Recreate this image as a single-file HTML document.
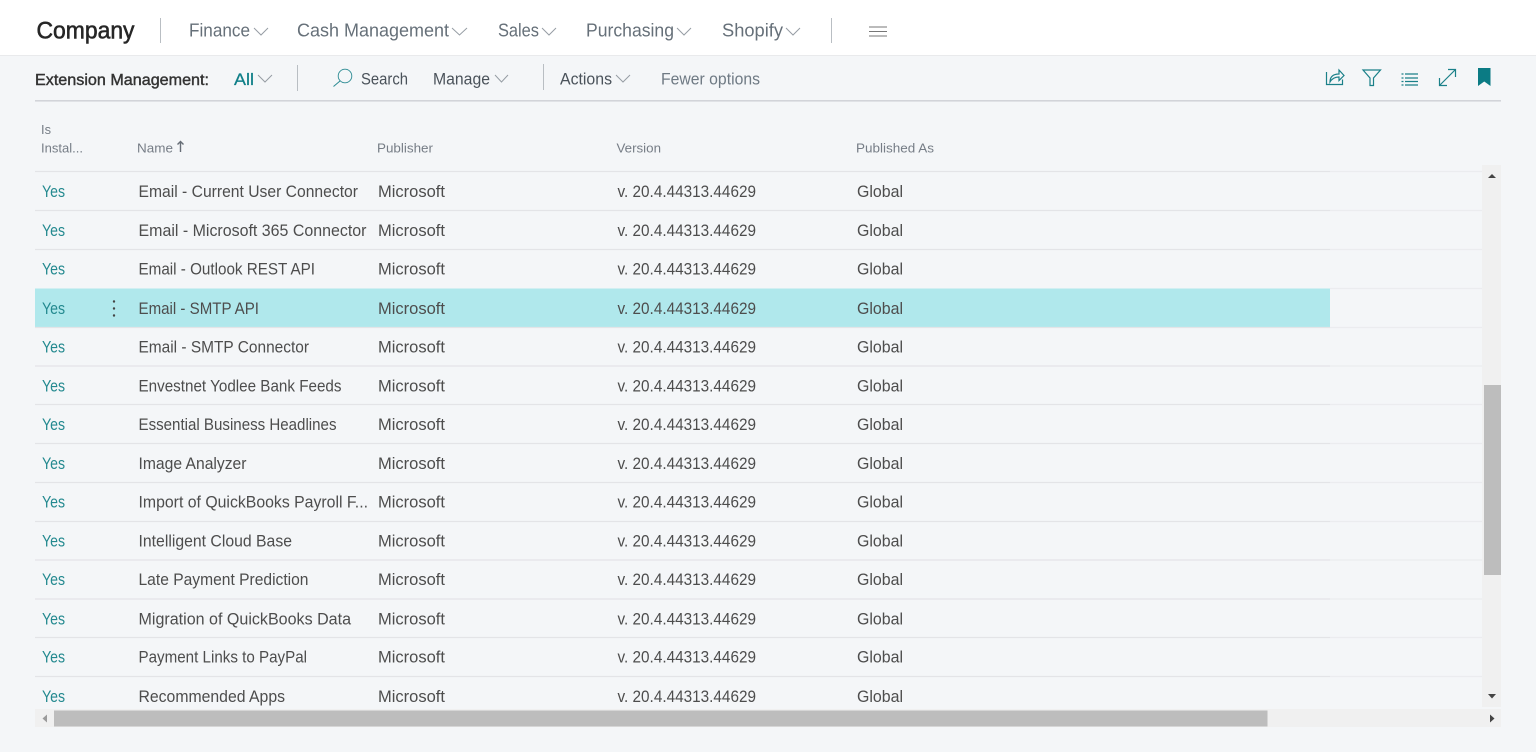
<!DOCTYPE html>
<html lang="en"><head><meta charset="utf-8"><title>Extension Management</title>
<style>
html,body{margin:0;padding:0;width:1536px;height:752px;overflow:hidden;background:#f4f6f8}
svg{display:block;font-family:"Liberation Sans",sans-serif;filter:blur(.3px)}
.nav{font-size:18px;fill:#667079}
.tb{font-size:16.500px;fill:#4a525a}
.th{font-size:13px;fill:#767d86}
.y{font-size:16.500px;fill:#23898f}
.c{font-size:16.500px;fill:#4d4d4d}
.chev{fill:none;stroke:#969da4;stroke-width:1}
.ic{fill:none;stroke:#1a8089;stroke-width:1.200}
.sep{stroke:#e3e4e7;stroke-width:1.300}
.sep2{stroke:#ebecef;stroke-width:1.300}
</style></head><body>
<svg width="1536" height="752" viewBox="0 0 1536 752" xmlns="http://www.w3.org/2000/svg">
<rect width="1536" height="752" fill="#f4f6f8"/>
<rect width="1536" height="55" fill="#fff"/>
<rect y="55" width="1536" height="1" fill="#e9eaec"/>

<text x="36.500" y="38.500" font-size="24" fill="#262626" stroke="#262626" stroke-width=".55" textLength="98" lengthAdjust="spacingAndGlyphs">Company</text>
<rect x="160" y="18" width="1" height="25" fill="#b9bec3"/>
<text class="nav" x="189" y="36.500" textLength="61" lengthAdjust="spacingAndGlyphs">Finance</text>
<path class="chev" d="M254 28l7 7 7-7"/>
<text class="nav" x="297" y="36.500" textLength="152" lengthAdjust="spacingAndGlyphs">Cash Management</text>
<path class="chev" d="M452 28l7.500 7 7.500-7"/>
<text class="nav" x="498" y="36.500" textLength="41" lengthAdjust="spacingAndGlyphs">Sales</text>
<path class="chev" d="M542 28l7 7 7-7"/>
<text class="nav" x="586" y="36.500" textLength="88" lengthAdjust="spacingAndGlyphs">Purchasing</text>
<path class="chev" d="M677 28l7 7 7-7"/>
<text class="nav" x="722" y="36.500" textLength="61" lengthAdjust="spacingAndGlyphs">Shopify</text>
<path class="chev" d="M786 28l7 7 7-7"/>
<rect x="831" y="18" width="1" height="25" fill="#b9bec3"/>
<path d="M869 27h18M869 31.500h18M869 36h18" stroke="#777" stroke-width="1" fill="none"/>

<text x="35" y="85" font-size="15.500" fill="#333" stroke="#333" stroke-width=".4" textLength="174" lengthAdjust="spacingAndGlyphs">Extension Management:</text>
<text x="234" y="85" font-size="17" fill="#0f7f88" textLength="20" lengthAdjust="spacingAndGlyphs" stroke="#0f7f88" stroke-width=".25">All</text>
<path class="chev" d="M258 75l7 7 7-7"/>
<rect x="297" y="65" width="1" height="26" fill="#b9bec3"/>
<circle cx="345" cy="76" r="6.800" fill="none" stroke="#2a8a92" stroke-width=".9"/>
<path d="M340 81l-6.500 5.500" fill="none" stroke="#2a8a92" stroke-width="1"/>
<text class="tb" x="361" y="84.500" textLength="47" lengthAdjust="spacingAndGlyphs">Search</text>
<text class="tb" x="433" y="84.500" textLength="57" lengthAdjust="spacingAndGlyphs">Manage</text>
<path class="chev" d="M495 75l6.500 7 6.500-7"/>
<rect x="543" y="64" width="1" height="26" fill="#b9bec3"/>
<text class="tb" x="560" y="84.500" textLength="52" lengthAdjust="spacingAndGlyphs">Actions</text>
<path class="chev" d="M616 75l7 7 7-7"/>
<text class="tb" x="661" y="84.500" textLength="99" lengthAdjust="spacingAndGlyphs" style="fill:#6f7a84">Fewer options</text>

<path class="ic" d="M1326.500 72v12.500h16v-5"/>
<path class="ic" d="M1330 82c0-5 3-8 9-8v-4l5 5.500-5 5v-3.500c-4 0-7 1.500-9 5z"/>
<path class="ic" d="M1363 70h17.500l-7 8v7.500h-3.500V78z"/>
<path class="ic" d="M1401.500 74h2M1405 74h13M1401.500 78h2M1405 78h13M1401.500 81.500h2M1405 81.500h13M1401.500 85h2M1405 85h13"/>
<path class="ic" d="M1439.500 85.500l16-16M1448 69.500h7.500v7.500M1439.500 78v7.500h7.500"/>
<path d="M1478 68h12.500v18l-6.250-4.500-6.250 4.500z" fill="#0b7b84"/>

<rect x="35" y="100" width="1466" height="1.600" fill="#d2d4d9"/>

<text class="th" x="41" y="134" textLength="10" lengthAdjust="spacingAndGlyphs">Is</text>
<text class="th" x="41" y="152.500" textLength="42" lengthAdjust="spacingAndGlyphs">Instal...</text>
<text class="th" x="137" y="152.500" textLength="36" lengthAdjust="spacingAndGlyphs">Name</text>
<path d="M180.500 152v-10M177.500 144.500l3-3 3 3" fill="none" stroke="#666d76" stroke-width="1.400"/>
<text class="th" x="377" y="152.500" textLength="56" lengthAdjust="spacingAndGlyphs">Publisher</text>
<text class="th" x="616.500" y="152.500" textLength="44.500" lengthAdjust="spacingAndGlyphs">Version</text>
<text class="th" x="856" y="152.500" textLength="78" lengthAdjust="spacingAndGlyphs">Published As</text>

<rect x="35" y="288.500" width="1295" height="38.500" fill="#b0e8ec"/>

<g class="sep">
<path d="M35 171.500H1330M35 210.500H1330M35 249.500H1330M35 327.500H1330M35 366H1330M35 404.500H1330M35 443.500H1330M35 482.500H1330M35 521.500H1330M35 560H1330M35 599H1330M35 637.500H1330M35 676.500H1330"/>
</g>
<g class="sep2">
<path d="M1330 171.500H1482M1330 210.500H1482M1330 249.500H1482M1330 288.500H1482M1330 327.500H1482M1330 366H1482M1330 404.500H1482M1330 443.500H1482M1330 482.500H1482M1330 521.500H1482M1330 560H1482M1330 599H1482M1330 637.500H1482M1330 676.500H1482"/>
</g>

<circle cx="114" cy="301.500" r="1.200" fill="#444"/><circle cx="114" cy="308.500" r="1.200" fill="#444"/><circle cx="114" cy="315.500" r="1.200" fill="#444"/>

<text class="y" x="42" y="197" textLength="23" lengthAdjust="spacingAndGlyphs">Yes</text><text class="c" x="138.500" y="197" textLength="219.500" lengthAdjust="spacingAndGlyphs">Email - Current User Connector</text><text class="c" x="378" y="197" textLength="67" lengthAdjust="spacingAndGlyphs">Microsoft</text><text class="c" x="617.500" y="197" textLength="138.500" lengthAdjust="spacingAndGlyphs">v. 20.4.44313.44629</text><text class="c" x="857" y="197" textLength="46" lengthAdjust="spacingAndGlyphs">Global</text>
<text class="y" x="42" y="236" textLength="23" lengthAdjust="spacingAndGlyphs">Yes</text><text class="c" x="138.500" y="236" textLength="228" lengthAdjust="spacingAndGlyphs">Email - Microsoft 365 Connector</text><text class="c" x="378" y="236" textLength="67" lengthAdjust="spacingAndGlyphs">Microsoft</text><text class="c" x="617.500" y="236" textLength="138.500" lengthAdjust="spacingAndGlyphs">v. 20.4.44313.44629</text><text class="c" x="857" y="236" textLength="46" lengthAdjust="spacingAndGlyphs">Global</text>
<text class="y" x="42" y="274.500" textLength="23" lengthAdjust="spacingAndGlyphs">Yes</text><text class="c" x="138.500" y="274.500" textLength="176.500" lengthAdjust="spacingAndGlyphs">Email - Outlook REST API</text><text class="c" x="378" y="274.500" textLength="67" lengthAdjust="spacingAndGlyphs">Microsoft</text><text class="c" x="617.500" y="274.500" textLength="138.500" lengthAdjust="spacingAndGlyphs">v. 20.4.44313.44629</text><text class="c" x="857" y="274.500" textLength="46" lengthAdjust="spacingAndGlyphs">Global</text>
<text class="y" x="42" y="314" textLength="23" lengthAdjust="spacingAndGlyphs">Yes</text><text class="c" x="138.500" y="314" textLength="120.500" lengthAdjust="spacingAndGlyphs">Email - SMTP API</text><text class="c" x="378" y="314" textLength="67" lengthAdjust="spacingAndGlyphs">Microsoft</text><text class="c" x="617.500" y="314" textLength="138.500" lengthAdjust="spacingAndGlyphs">v. 20.4.44313.44629</text><text class="c" x="857" y="314" textLength="46" lengthAdjust="spacingAndGlyphs">Global</text>
<text class="y" x="42" y="352.500" textLength="23" lengthAdjust="spacingAndGlyphs">Yes</text><text class="c" x="138.500" y="352.500" textLength="170.500" lengthAdjust="spacingAndGlyphs">Email - SMTP Connector</text><text class="c" x="378" y="352.500" textLength="67" lengthAdjust="spacingAndGlyphs">Microsoft</text><text class="c" x="617.500" y="352.500" textLength="138.500" lengthAdjust="spacingAndGlyphs">v. 20.4.44313.44629</text><text class="c" x="857" y="352.500" textLength="46" lengthAdjust="spacingAndGlyphs">Global</text>
<text class="y" x="42" y="391.500" textLength="23" lengthAdjust="spacingAndGlyphs">Yes</text><text class="c" x="138.500" y="391.500" textLength="203" lengthAdjust="spacingAndGlyphs">Envestnet Yodlee Bank Feeds</text><text class="c" x="378" y="391.500" textLength="67" lengthAdjust="spacingAndGlyphs">Microsoft</text><text class="c" x="617.500" y="391.500" textLength="138.500" lengthAdjust="spacingAndGlyphs">v. 20.4.44313.44629</text><text class="c" x="857" y="391.500" textLength="46" lengthAdjust="spacingAndGlyphs">Global</text>
<text class="y" x="42" y="430" textLength="23" lengthAdjust="spacingAndGlyphs">Yes</text><text class="c" x="138.500" y="430" textLength="198" lengthAdjust="spacingAndGlyphs">Essential Business Headlines</text><text class="c" x="378" y="430" textLength="67" lengthAdjust="spacingAndGlyphs">Microsoft</text><text class="c" x="617.500" y="430" textLength="138.500" lengthAdjust="spacingAndGlyphs">v. 20.4.44313.44629</text><text class="c" x="857" y="430" textLength="46" lengthAdjust="spacingAndGlyphs">Global</text>
<text class="y" x="42" y="469" textLength="23" lengthAdjust="spacingAndGlyphs">Yes</text><text class="c" x="138.500" y="469" textLength="108" lengthAdjust="spacingAndGlyphs">Image Analyzer</text><text class="c" x="378" y="469" textLength="67" lengthAdjust="spacingAndGlyphs">Microsoft</text><text class="c" x="617.500" y="469" textLength="138.500" lengthAdjust="spacingAndGlyphs">v. 20.4.44313.44629</text><text class="c" x="857" y="469" textLength="46" lengthAdjust="spacingAndGlyphs">Global</text>
<text class="y" x="42" y="507.500" textLength="23" lengthAdjust="spacingAndGlyphs">Yes</text><text class="c" x="138.500" y="507.500" textLength="229.500" lengthAdjust="spacingAndGlyphs">Import of QuickBooks Payroll F...</text><text class="c" x="378" y="507.500" textLength="67" lengthAdjust="spacingAndGlyphs">Microsoft</text><text class="c" x="617.500" y="507.500" textLength="138.500" lengthAdjust="spacingAndGlyphs">v. 20.4.44313.44629</text><text class="c" x="857" y="507.500" textLength="46" lengthAdjust="spacingAndGlyphs">Global</text>
<text class="y" x="42" y="546.500" textLength="23" lengthAdjust="spacingAndGlyphs">Yes</text><text class="c" x="138.500" y="546.500" textLength="153.500" lengthAdjust="spacingAndGlyphs">Intelligent Cloud Base</text><text class="c" x="378" y="546.500" textLength="67" lengthAdjust="spacingAndGlyphs">Microsoft</text><text class="c" x="617.500" y="546.500" textLength="138.500" lengthAdjust="spacingAndGlyphs">v. 20.4.44313.44629</text><text class="c" x="857" y="546.500" textLength="46" lengthAdjust="spacingAndGlyphs">Global</text>
<text class="y" x="42" y="585" textLength="23" lengthAdjust="spacingAndGlyphs">Yes</text><text class="c" x="138.500" y="585" textLength="170" lengthAdjust="spacingAndGlyphs">Late Payment Prediction</text><text class="c" x="378" y="585" textLength="67" lengthAdjust="spacingAndGlyphs">Microsoft</text><text class="c" x="617.500" y="585" textLength="138.500" lengthAdjust="spacingAndGlyphs">v. 20.4.44313.44629</text><text class="c" x="857" y="585" textLength="46" lengthAdjust="spacingAndGlyphs">Global</text>
<text class="y" x="42" y="624.500" textLength="23" lengthAdjust="spacingAndGlyphs">Yes</text><text class="c" x="138.500" y="624.500" textLength="212.500" lengthAdjust="spacingAndGlyphs">Migration of QuickBooks Data</text><text class="c" x="378" y="624.500" textLength="67" lengthAdjust="spacingAndGlyphs">Microsoft</text><text class="c" x="617.500" y="624.500" textLength="138.500" lengthAdjust="spacingAndGlyphs">v. 20.4.44313.44629</text><text class="c" x="857" y="624.500" textLength="46" lengthAdjust="spacingAndGlyphs">Global</text>
<text class="y" x="42" y="662.500" textLength="23" lengthAdjust="spacingAndGlyphs">Yes</text><text class="c" x="138.500" y="662.500" textLength="168.500" lengthAdjust="spacingAndGlyphs">Payment Links to PayPal</text><text class="c" x="378" y="662.500" textLength="67" lengthAdjust="spacingAndGlyphs">Microsoft</text><text class="c" x="617.500" y="662.500" textLength="138.500" lengthAdjust="spacingAndGlyphs">v. 20.4.44313.44629</text><text class="c" x="857" y="662.500" textLength="46" lengthAdjust="spacingAndGlyphs">Global</text>
<text class="y" x="42" y="702" textLength="23" lengthAdjust="spacingAndGlyphs">Yes</text><text class="c" x="138.500" y="702" textLength="146.500" lengthAdjust="spacingAndGlyphs">Recommended Apps</text><text class="c" x="378" y="702" textLength="67" lengthAdjust="spacingAndGlyphs">Microsoft</text><text class="c" x="617.500" y="702" textLength="138.500" lengthAdjust="spacingAndGlyphs">v. 20.4.44313.44629</text><text class="c" x="857" y="702" textLength="46" lengthAdjust="spacingAndGlyphs">Global</text>

<rect x="1482" y="165" width="19" height="542" fill="#f0f0f0"/>
<rect x="1484" y="385" width="17" height="190" fill="#bdbdbd"/>
<path d="M1488 178h8l-4-4z" fill="#444"/>
<path d="M1488 694h8l-4 4.500z" fill="#444"/>

<rect x="35" y="709" width="1466" height="18" fill="#f0f0f0"/>
<rect x="54" y="710.500" width="1213.500" height="16" fill="#bdbdbd"/>
<path d="M47 714.500v8l-4.500-4z" fill="#9a9a9a"/>
<path d="M1490 714.500v8l4.500-4z" fill="#444"/>
</svg>
</body></html>
